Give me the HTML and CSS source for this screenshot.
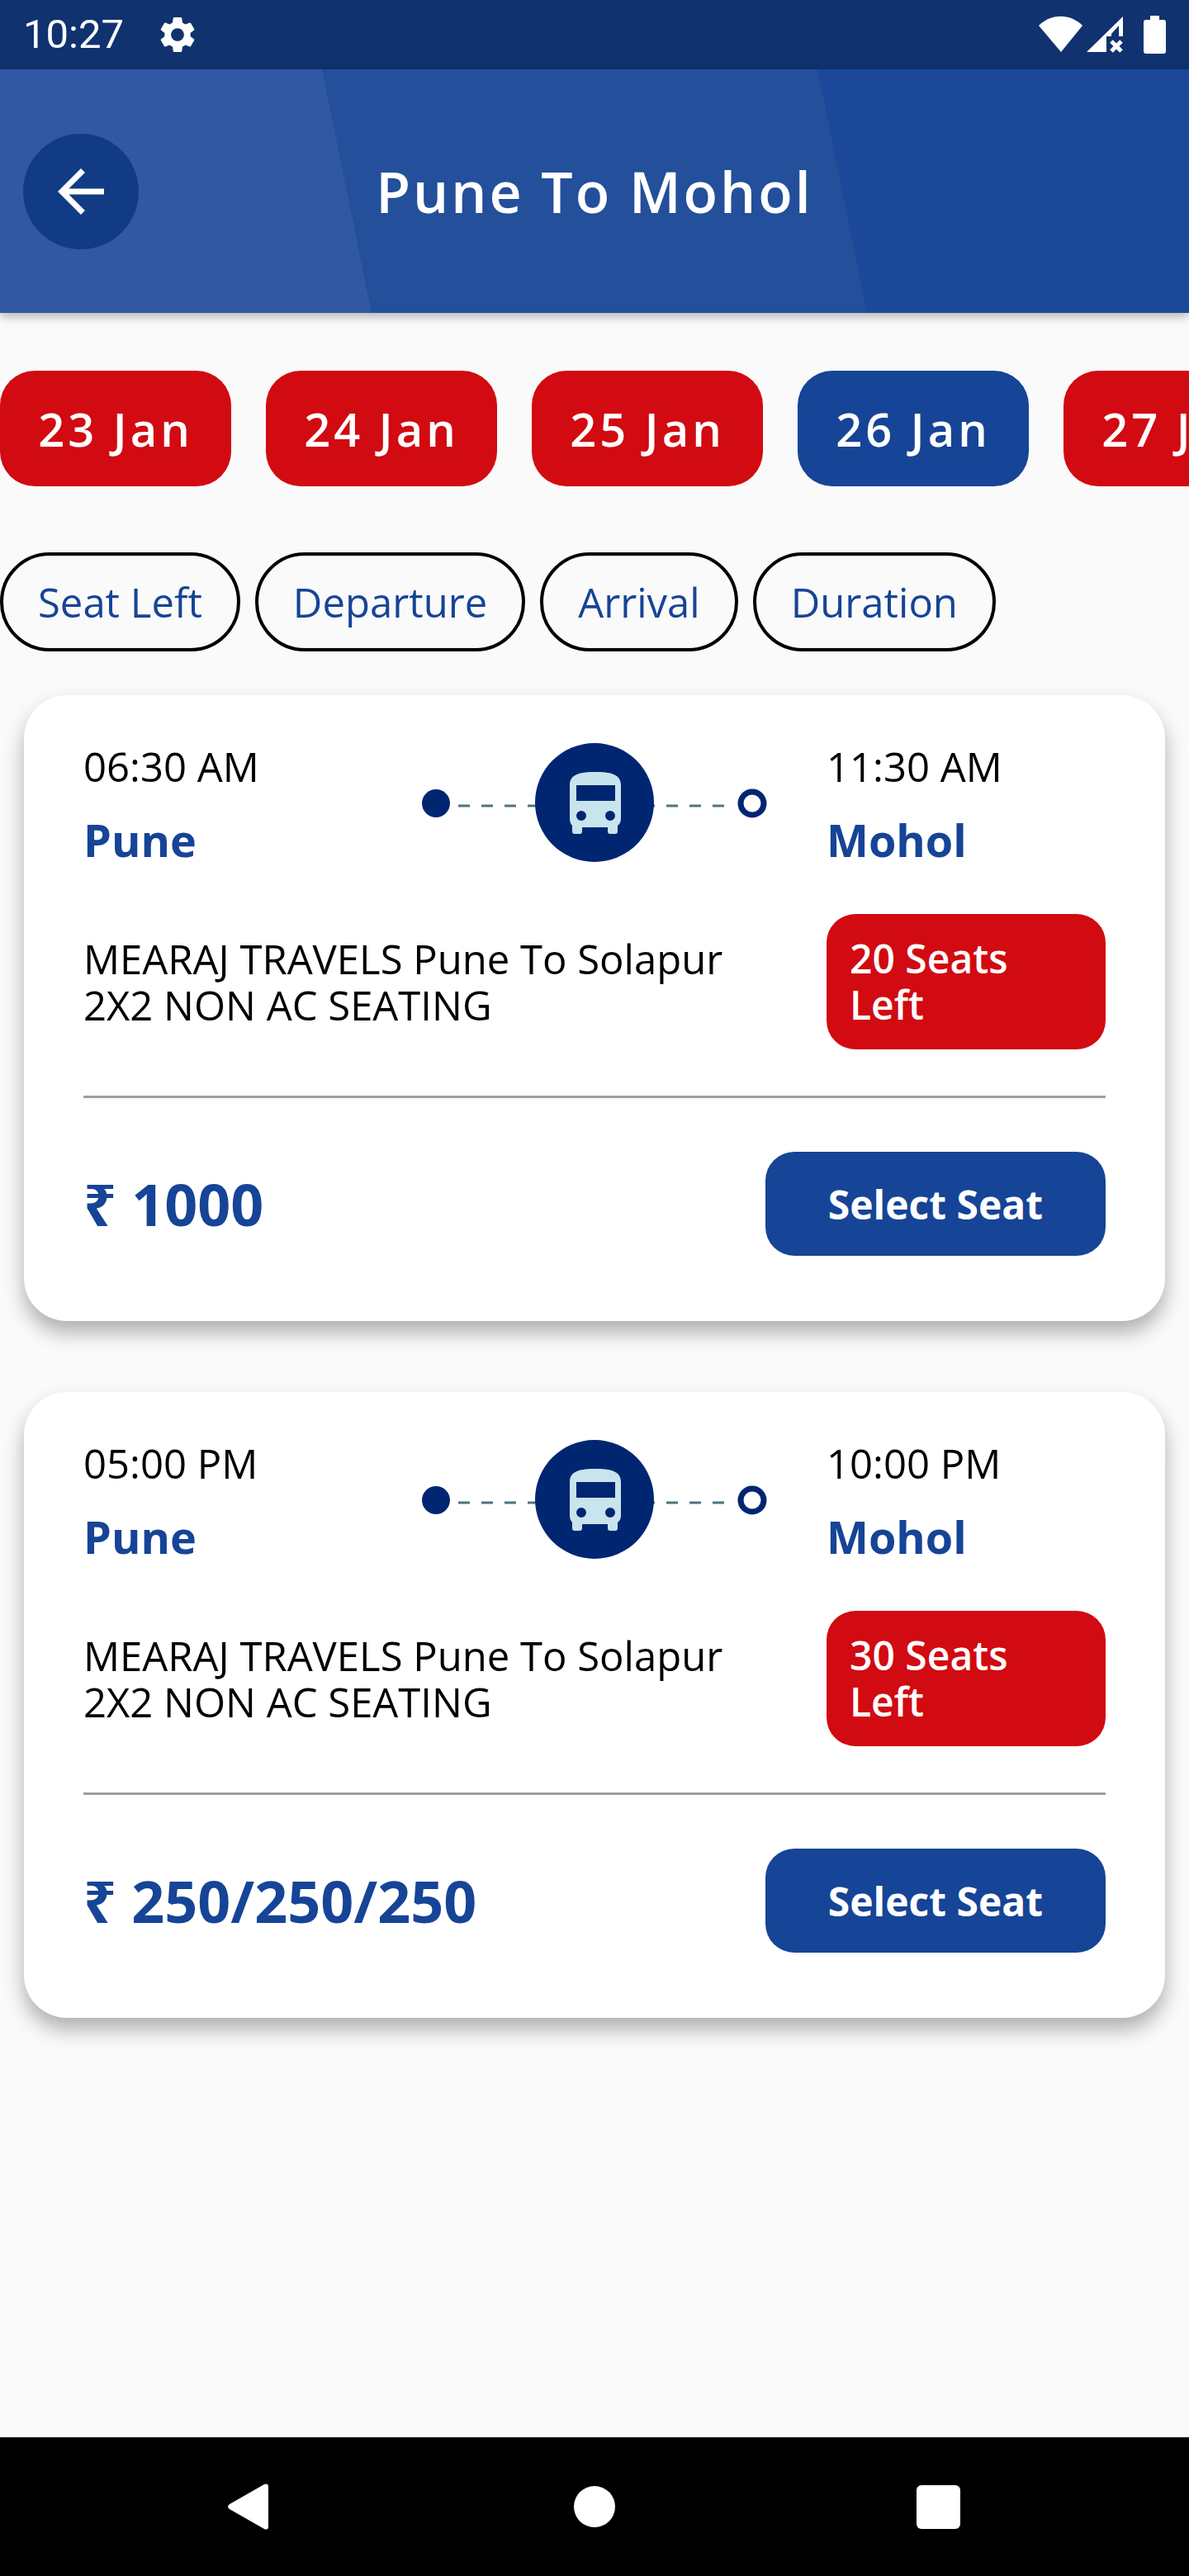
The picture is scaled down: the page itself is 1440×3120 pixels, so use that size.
FILE: index.html
```html
<!DOCTYPE html>
<html lang="en">
<head>
    <meta charset="UTF-8" />
    <meta name="viewport" content="width=device-width, initial-scale=1" />
    <title>Pune To Mohol</title>
    <link rel="stylesheet" href="styles.css">
</head>
<body>
    <div class="status_bar">
        <div class="status_left">
            <span>10:27</span>
            <svg class="gear" viewBox="1 1 22 22" width="48" height="48" aria-hidden="true">
                <path fill="#fff" d="M19.14 12.94c.04-.3.06-.61.06-.94 0-.32-.02-.64-.07-.94l2.03-1.58c.18-.14.23-.41.12-.61l-1.92-3.32c-.12-.22-.37-.29-.59-.22l-2.39.96c-.5-.38-1.03-.7-1.62-.94l-.36-2.54c-.04-.24-.24-.41-.48-.41h-3.84c-.24 0-.43.17-.47.41l-.36 2.54c-.59.24-1.13.57-1.62.94l-2.39-.96c-.22-.08-.47 0-.59.22L2.74 8.87c-.12.21-.08.47.12.61l2.03 1.58c-.05.3-.09.63-.09.94s.02.64.07.94l-2.03 1.58c-.18.14-.23.41-.12.61l1.92 3.32c.12.22.37.29.59.22l2.39-.96c.5.38 1.03.7 1.62.94l.36 2.54c.05.24.24.41.48.41h3.84c.24 0 .44-.17.47-.41l.36-2.54c.59-.24 1.13-.56 1.62-.94l2.39.96c.22.08.47 0 .59-.22l1.92-3.32c.12-.22.07-.47-.12-.61l-2.01-1.58zM12 15.6c-1.98 0-3.6-1.62-3.6-3.6s1.62-3.6 3.6-3.6 3.6 1.62 3.6 3.6-1.62 3.6-3.6 3.6z"/>
            </svg>
        </div>
        <svg viewBox="0 0 156 48" width="156" height="48" aria-hidden="true">
            <g fill="#fff">
                <path d="M2 13C17-2 40-2 55 13L29 45Z"/>
                <path d="M60 45L104 2V26H99V13L90 23V26H84V45Z"/>
                <path d="M137 1h11v5h5q3 0 3 3v35q0 3-3 3h-21q-3 0-3-3V9q0-3 3-3h5z"/>
            </g>
            <path d="M90 32l12 12M102 32L90 44" stroke="#fff" stroke-width="5"/>
        </svg>
    </div>

    <header class="header">
        <button type="button" class="back_button" aria-label="Back">
            <svg viewBox="0 0 24 24" width="84" height="84">
                <path fill="#fff" d="M20 11H7.83l5.59-5.59L12 4l-8 8 8 8 1.41-1.41L7.83 13H20v-2z"/>
            </svg>
        </button>
        <h1>Pune To Mohol</h1>
    </header>

    <main>
        <div class="dates">
            <button type="button" class="date">23 Jan</button>
            <button type="button" class="date">24 Jan</button>
            <button type="button" class="date">25 Jan</button>
            <button type="button" class="date active">26 Jan</button>
            <button type="button" class="date">27 Jan</button>
        </div>

        <div class="filters">
            <button type="button" class="filter">Seat Left</button>
            <button type="button" class="filter">Departure</button>
            <button type="button" class="filter">Arrival</button>
            <button type="button" class="filter">Duration</button>
        </div>

        <div class="trips">
            <section class="trip">
                <div class="trip_row">
                    <div class="trip_from">
                        <div class="stop">
                            <div class="time">06:30 AM</div>
                            <div class="city">Pune</div>
                        </div>
                        <svg class="route" viewBox="0 0 418 144" width="418" height="144" aria-hidden="true">
                            <circle cx="17" cy="73" r="17" fill="#002672"/>
                            <path d="M44 76H367" stroke="#4c7482" stroke-width="3" stroke-dasharray="14 14"/>
                            <circle cx="400" cy="73" r="14" fill="#fff" stroke="#002672" stroke-width="7"/>
                            <circle cx="209" cy="72" r="72" fill="#002672"/>
                            <path fill="#c8e4ec" fill-rule="evenodd" d="M179 51c0-14 14-16 31-16s31 2 31 16v40c0 4-1 7-4 9v7q0 3-3 3h-6q-3 0-3-3v-5h-31v5q0 3-3 3h-6q-3 0-3-3v-7c-2-2-3-5-3-9zM187 51v19h47V51zM193 82a6 6 0 1 0 0 12 6 6 0 1 0 0-12zM228 82a6 6 0 1 0 0 12 6 6 0 1 0 0-12z"/>
                        </svg>
                    </div>
                    <div class="stop">
                        <div class="time">11:30 AM</div>
                        <div class="city">Mohol</div>
                    </div>
                </div>
                <div class="trip_row details">
                    <div class="operator">MEARAJ TRAVELS Pune To Solapur<br>2X2 NON AC SEATING</div>
                    <div class="seats">20 Seats<br>Left</div>
                </div>
                <div class="trip_bottom">
                    <div class="price">₹ 1000</div>
                    <button type="button" class="select_button">Select Seat</button>
                </div>
            </section>

            <section class="trip">
                <div class="trip_row">
                    <div class="trip_from">
                        <div class="stop">
                            <div class="time">05:00 PM</div>
                            <div class="city">Pune</div>
                        </div>
                        <svg class="route" viewBox="0 0 418 144" width="418" height="144" aria-hidden="true">
                            <circle cx="17" cy="73" r="17" fill="#002672"/>
                            <path d="M44 76H367" stroke="#4c7482" stroke-width="3" stroke-dasharray="14 14"/>
                            <circle cx="400" cy="73" r="14" fill="#fff" stroke="#002672" stroke-width="7"/>
                            <circle cx="209" cy="72" r="72" fill="#002672"/>
                            <path fill="#c8e4ec" fill-rule="evenodd" d="M179 51c0-14 14-16 31-16s31 2 31 16v40c0 4-1 7-4 9v7q0 3-3 3h-6q-3 0-3-3v-5h-31v5q0 3-3 3h-6q-3 0-3-3v-7c-2-2-3-5-3-9zM187 51v19h47V51zM193 82a6 6 0 1 0 0 12 6 6 0 1 0 0-12zM228 82a6 6 0 1 0 0 12 6 6 0 1 0 0-12z"/>
                        </svg>
                    </div>
                    <div class="stop">
                        <div class="time">10:00 PM</div>
                        <div class="city">Mohol</div>
                    </div>
                </div>
                <div class="trip_row details">
                    <div class="operator">MEARAJ TRAVELS Pune To Solapur<br>2X2 NON AC SEATING</div>
                    <div class="seats">30 Seats<br>Left</div>
                </div>
                <div class="trip_bottom">
                    <div class="price">₹ 250/250/250</div>
                    <button type="button" class="select_button">Select Seat</button>
                </div>
            </section>
        </div>
    </main>

    <nav class="nav_bar">
        <button type="button" aria-label="Back">
            <svg viewBox="0 0 56 56" width="56" height="56"><path fill="#fff" d="M2 25L44 1q5-2 5 3v48q0 5-5 3L2 31q-4-3 0-6z"/></svg>
        </button>
        <button type="button" aria-label="Home">
            <svg viewBox="0 0 56 56" width="56" height="56"><circle cx="28" cy="28" r="25" fill="#fff"/></svg>
        </button>
        <button type="button" aria-label="Recent apps">
            <svg viewBox="0 0 56 56" width="56" height="56"><rect x="2" y="2" width="53" height="53" rx="6" fill="#fff"/></svg>
        </button>
    </nav>
</body>
</html>
```
FILE: styles.css
```css
* {
    box-sizing: border-box;
}
body {
    margin: 0;
    min-height: 100vh;
    display: flex;
    flex-direction: column;
    font-family: "Open Sans", "Noto Sans", sans-serif;
    font-size: 49px;
    line-height: 56px;
    color: #000;
    background-color: #fafafa;
    overflow-x: hidden;
}
button {
    font-family: inherit;
    border: none;
    padding: 0;
    cursor: pointer;
}
svg {
    display: block;
}
h1 {
    margin: 0;
}
.status_bar {
    height: 84px;
    padding: 0 28px;
    display: flex;
    justify-content: space-between;
    align-items: center;
    color: white;
    background-color: #10326f;
    font-family: Roboto, sans-serif;
}
.status_left {
    display: flex;
    align-items: center;
    gap: 41px;
}
.header {
    height: 295px;
    padding: 0 28px;
    display: grid;
    grid-template-columns: 140px 1fr 140px;
    align-items: center;
    color: white;
    background: linear-gradient(78.5deg, #3158a3 30%, #234f9b 30%, #234f9b 70%, #1b4898 70%);
    box-shadow: 0 4px 12px rgb(0 0 0 / 0.3);
}
.header h1 {
    font-size: 68px;
    line-height: 80px;
    font-weight: 600;
    letter-spacing: 3px;
    text-align: center;
}
.back_button {
    width: 140px;
    height: 140px;
    display: flex;
    align-items: center;
    justify-content: center;
    border-radius: 50%;
    background-color: #113c85;
}
main {
    flex: 1;
}
.dates {
    display: flex;
    gap: 42px;
    margin-top: 70px;
    overflow: hidden;
}
.date {
    flex: none;
    width: 280px;
    height: 140px;
    border-radius: 42px;
    background-color: #d20a11;
    color: white;
    font-size: 56px;
    font-weight: 600;
    letter-spacing: 4px;
}
.date.active {
    background-color: #164496;
}
.filters {
    display: flex;
    gap: 18px;
    margin-top: 80px;
}
.filter {
    height: 120px;
    padding: 0 42px;
    border: 4px solid #000;
    border-radius: 60px;
    background: none;
    color: #164496;
    font-size: 49px;
}
.trips {
    display: flex;
    flex-direction: column;
    gap: 86px;
    padding: 53px 29px 86px;
}
.trip {
    padding: 58px 72px 79px;
    border-radius: 52px;
    background: white;
    box-shadow: 0 14px 24px rgb(0 0 0 / 0.3);
}
.trip_row {
    display: grid;
    grid-template-columns: 1fr 338px;
    column-gap: 72px;
}
.trip_from {
    display: flex;
    justify-content: space-between;
}
.city {
    margin-top: 29px;
    font-size: 54px;
    line-height: 64px;
    font-weight: 700;
    color: #164496;
}
.details {
    margin-top: 58px;
    padding-bottom: 56px;
    border-bottom: 3px solid #9e9e9e;
    align-items: center;
}
.seats {
    padding: 26px 28px;
    border-radius: 35px;
    background-color: #d20a11;
    color: white;
    font-size: 48px;
    font-weight: 600;
}
.trip_bottom {
    display: flex;
    justify-content: space-between;
    align-items: center;
    margin-top: 65px;
}
.price {
    font-size: 70px;
    font-weight: 700;
    color: #164496;
}
.select_button {
    width: 412px;
    height: 126px;
    border-radius: 35px;
    background-color: #164496;
    color: white;
    font-size: 48px;
    font-weight: 700;
}
.nav_bar {
    height: 168px;
    padding: 0 276px;
    display: flex;
    justify-content: space-between;
    align-items: center;
    background: #000;
}
.nav_bar button {
    background: none;
}
```
